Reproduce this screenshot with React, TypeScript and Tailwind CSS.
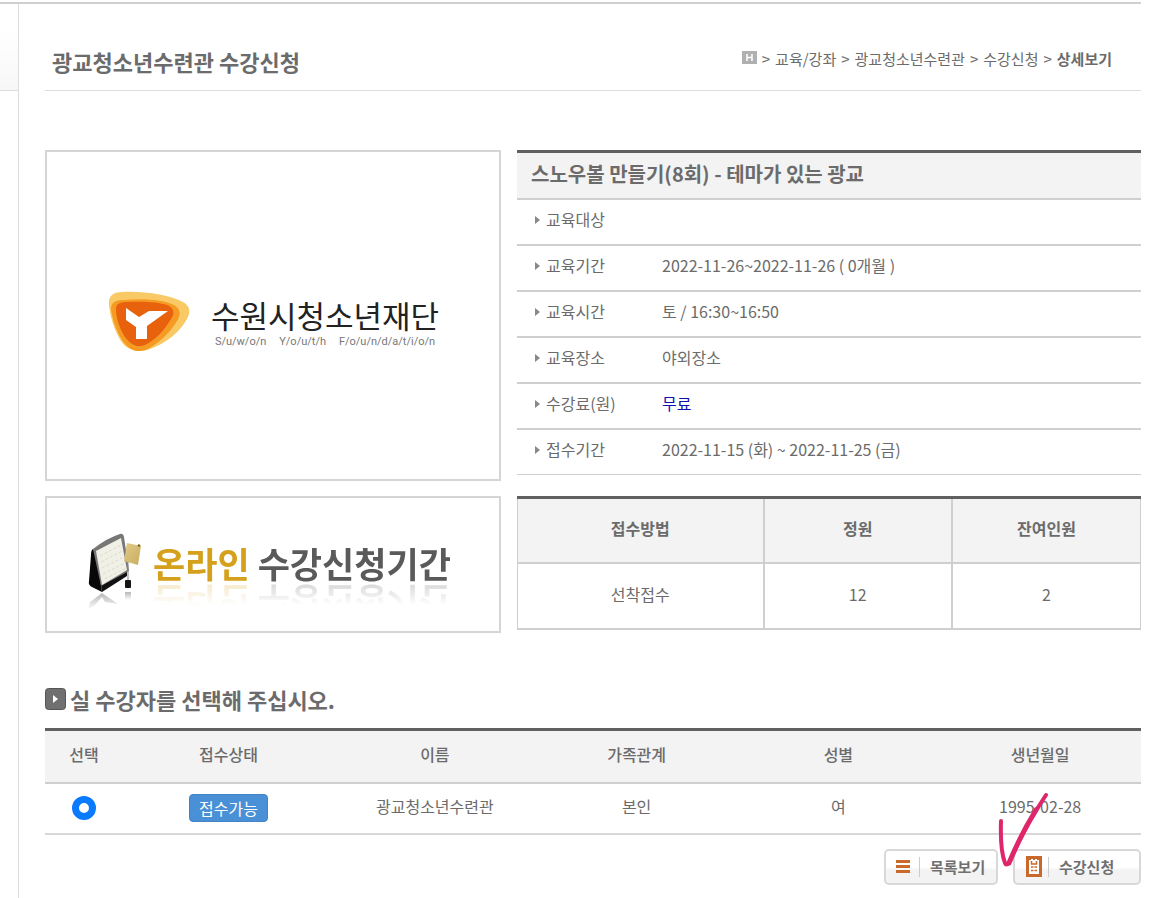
import { useState } from "react";

const details = [
  { label: "교육대상", value: "" },
  { label: "교육기간", value: "2022-11-26~2022-11-26 ( 0개월 )" },
  { label: "교육시간", value: "토 / 16:30~16:50" },
  { label: "교육장소", value: "야외장소" },
  { label: "수강료(원)", value: "무료", highlight: true },
  { label: "접수기간", value: "2022-11-15 (화) ~ 2022-11-25 (금)" },
];

const crumbs = ["교육/강좌", "광교청소년수련관", "수강신청"];

function FoundationLogo() {
  return (
    <div className="flex items-center gap-5">
      <svg width="84" height="62" viewBox="0 0 84 62" aria-hidden="true">
        <path
          d="M2 14C1 5 6 1 15 1C38 0 63 4 76 11C83 15 84 21 80 28C73 41 58 53 43 58C31 62 21 60 14 50C7 39 3 25 2 14Z"
          fill="#f9c965"
        />
        <path
          d="M4 18C4 11 9 9 17 9C37 7 57 9 67 14C74 18 74 24 70 30C62 43 51 53 39 59C29 62 22 59 15 49C9 39 5 27 4 18Z"
          fill="#f59a23"
        />
        <path
          d="M9 18C9 13 13 11 19 11C35 10 52 11 60 14C67 17 68 22 64 28C57 40 48 49 38 54C30 57 24 54 18 46C12 37 9 26 9 18Z"
          fill="#e8610c"
        />
        <path d="M19 17L32 26L42 20H61L40 35V48H29V36L19 29Z" fill="#fff" />
      </svg>
      <div className="flex flex-col">
        <span className="text-[31px] leading-10 text-[#222]">수원시청소년재단</span>
        <span className="flex justify-between px-1 font-[Roboto] text-[11px] leading-[14px] text-[#777]">
          <span>S/u/w/o/n</span>
          <span>Y/o/u/t/h</span>
          <span>F/o/u/n/d/a/t/i/o/n</span>
        </span>
      </div>
    </div>
  );
}

function DeskCalendar() {
  return (
    <svg width="56" height="80" viewBox="0 0 56 80" aria-hidden="true">
      <defs>
        <linearGradient id="shade" x1="0" y1="0" x2="0" y2="1">
          <stop offset="0" stopColor="#999" stopOpacity="0.7" />
          <stop offset="1" stopColor="#999" stopOpacity="0" />
        </linearGradient>
        <linearGradient id="note" x1="0" y1="0" x2="1" y2="1">
          <stop offset="0" stopColor="#e0ca88" />
          <stop offset="1" stopColor="#c9ae60" />
        </linearGradient>
      </defs>
      <path d="M6 16Q4 17 4 22L2 48Q1 52 5 54L15 59L10 24Z" fill="#080808" />
      <path d="M15 59L40 43V36L14 52Z" fill="#111" />
      <path d="M6 16Q20 5 33 1Q36 0 37 4L42 38L14 53Z" fill="#777" />
      <path d="M9 18L34 5L40 37L15 52Z" fill="#f0f0e6" />
      <path d="M13 23l21-11M14 29l21-11M15 35l22-11M16 41l22-11M18 46l21-11" stroke="#dcdccc" strokeDasharray="3 2" />
      <path d="M41 28V48" stroke="#888" />
      <path d="M40 10L54 13L51 32L37 28Z" fill="url(#note)" />
      <path d="M51 12l2 1" stroke="#775c22" strokeWidth="2" />
      <rect x="38" y="47" width="6" height="8" rx="1" fill="#151515" />
      <path d="M1 77L3 69L15 60L31 71L18 69L15 64L8 72Z" fill="url(#shade)" />
      <rect x="38" y="59" width="6" height="8" fill="url(#shade)" />
    </svg>
  );
}

function CourseInfo() {
  return (
    <table className="w-full table-fixed border-collapse text-left">
      <colgroup>
        <col className="w-[145px]" />
        <col />
      </colgroup>
      <thead>
        <tr className="h-[47px] border-t-3 border-b-2 border-t-[#606060] border-b-[#cfcfcf] bg-[#f3f3f3]">
          <th colSpan={2} className="px-[14px] pb-[2px] text-xl leading-6 font-bold">
            스노우볼 만들기(8회) - 테마가 있는 광교
          </th>
        </tr>
      </thead>
      <tbody>
        {details.map((row) => (
          <tr key={row.label} className="h-[46px] border-b-2 border-[#cfcfcf] last:border-b">
            <th scope="row" className="pb-[6px] pl-[18px] font-normal">
              <span className="flex items-center gap-[6px]">
                <svg width="5" height="8" viewBox="0 0 5 8" className="mt-[2px]" aria-hidden="true">
                  <path d="M0 0L5 4L0 8Z" fill="#888" />
                </svg>
                {row.label}
              </span>
            </th>
            <td className={row.highlight ? "pb-[6px] text-[#1010b0]" : "pb-[6px]"}>{row.value}</td>
          </tr>
        ))}
      </tbody>
    </table>
  );
}

function Capacity() {
  const th = "border-x-2 border-[#cfcfcf] pb-1 font-bold first:border-l last:border-r";
  const td = "border-x-2 border-[#cfcfcf] pb-1 first:border-l last:border-r";
  return (
    <table className="w-full table-fixed border-collapse text-center">
      <colgroup>
        <col className="w-[246px]" />
        <col />
        <col />
      </colgroup>
      <thead>
        <tr className="h-[65px] border-t-3 border-b-2 border-t-[#606060] border-b-[#cfcfcf] bg-[#f3f3f3]">
          <th className={th}>접수방법</th>
          <th className={th}>정원</th>
          <th className={th}>잔여인원</th>
        </tr>
      </thead>
      <tbody>
        <tr className="h-[66px] border-b-2 border-[#cfcfcf]">
          <td className={td}>선착접수</td>
          <td className={td}>12</td>
          <td className={td}>2</td>
        </tr>
      </tbody>
    </table>
  );
}

function Applicants() {
  const [selected, setSelected] = useState("self");

  return (
    <table className="w-full table-fixed border-collapse text-center">
      <colgroup>
        <col className="w-[78px]" />
        <col className="w-[211px]" />
        <col />
        <col />
        <col />
        <col />
      </colgroup>
      <thead>
        <tr className="h-[53px] border-t-3 border-b-2 border-t-[#606060] border-b-[#cfcfcf] bg-[#f3f3f3]">
          {["선택", "접수상태", "이름", "가족관계", "성별", "생년월일"].map((name) => (
            <th key={name} className="pb-1 font-medium">
              {name}
            </th>
          ))}
        </tr>
      </thead>
      <tbody>
        <tr className="h-[51px] border-b-2 border-[#d8d8d8]">
          <td>
            <input
              type="radio"
              name="applicant"
              value="self"
              aria-label="광교청소년수련관"
              checked={selected === "self"}
              onChange={(e) => setSelected(e.target.value)}
              className="mx-auto block size-6 appearance-none rounded-full border border-gray-400 bg-white checked:border-[7px] checked:border-[#0a7aff]"
            />
          </td>
          <td>
            <span className="inline-flex h-7 items-center rounded-sm border border-[#4384c4] bg-[#4a90d6] px-[9px] text-white">
              접수가능
            </span>
          </td>
          <td className="pb-1">광교청소년수련관</td>
          <td className="pb-1">본인</td>
          <td className="pb-1">여</td>
          <td className="pb-1">1995-02-28</td>
        </tr>
      </tbody>
    </table>
  );
}

function Actions() {
  const button =
    "flex h-9 items-center rounded-[5px] border-2 border-[#d8d8d8] bg-linear-to-b from-white from-50% to-[#f3f3f3] to-60% text-[15px] font-bold text-[#707070]";
  return (
    <div className="relative flex justify-end gap-[15px]">
      <button type="button" className={`${button} w-[114px] pl-[10px]`}>
        <svg width="14" height="13" viewBox="0 0 14 13" aria-hidden="true">
          <path d="M0 1.5H14M0 6.5H14M0 11.5H14" stroke="#c96a2b" strokeWidth="3" />
        </svg>
        <span className="mr-[10px] ml-[9px] h-5 w-px bg-[#ccc]" />
        목록보기
      </button>
      <button type="button" className={`${button} w-[128px] pl-[11px]`}>
        <svg width="16" height="21" viewBox="0 0 16 21" aria-hidden="true">
          <path d="M0 0H16V21H0Z" fill="#c9682b" />
          <path d="M3 4H5V3H7V4H9V3H11V4H13V18H3Z" fill="#fff" />
          <path d="M5.500 5V8H10.500V5M5 11H7.500M8.500 11H11M5 14.500H7.500M8.500 14.500H11" fill="none" stroke="#c9682b" strokeWidth="1.500" />
        </svg>
        <span className="mr-[10px] ml-[6px] h-5 w-px bg-[#ccc]" />
        수강신청
      </button>
      <svg
        className="pointer-events-none absolute right-[91px] bottom-[17px]"
        width="52"
        height="76"
        viewBox="0 0 52 76"
        aria-hidden="true"
      >
        <path
          d="M3 29Q2 58 7 71Q8 74 11 71Q26 36 48 3"
          fill="none"
          stroke="#e0266a"
          strokeWidth="4"
          strokeLinecap="round"
          strokeLinejoin="round"
        />
        <path d="M11 71Q23 42 38 18" fill="none" stroke="#e0266a" strokeWidth="5" strokeLinecap="round" />
      </svg>
    </div>
  );
}

export default function App() {
  return (
    <div className="flex min-h-screen flex-col bg-white pt-[2px] pr-[29px] font-['Noto_Sans_CJK_KR',sans-serif] text-base leading-6 text-[#6b6b6b]">
      <div className="flex grow border-t-2 border-[#cfcfcf]">
        <div className="w-[19px] shrink-0 border-r border-[#ddd]">
          <div className="h-[87px] border-b border-[#ddd] bg-linear-to-b from-white from-30% to-[#f7f7f7]" />
        </div>

        <main className="min-w-0 grow pl-[26px]">
          <header className="flex h-[87px] items-center justify-between border-b border-[#ddd] pr-[29px] pl-[7px]">
            <h1 className="pt-7 text-[22px] leading-8 font-bold">광교청소년수련관 수강신청</h1>
            <nav className="flex items-center gap-[5px] pt-6 text-[15px]">
              <a href="#" aria-label="홈" className="mb-1 flex h-[13px] w-[15px] items-center justify-center bg-[#b0b0b0]">
                <svg width="7" height="7" viewBox="0 0 7 7" aria-hidden="true">
                  <path d="M1 0V7M6 0V7M1 3.500H6" stroke="#fff" strokeWidth="1.500" />
                </svg>
              </a>
              {crumbs.map((crumb) => (
                <span key={crumb} className="flex gap-[5px]">
                  <span>&gt;</span>
                  <a href="#">{crumb}</a>
                </span>
              ))}
              <span>&gt;</span>
              <strong className="font-bold">상세보기</strong>
            </nav>
          </header>

          <div className="mt-[59px] grid grid-cols-[456fr_624fr] items-start gap-4">
            <div className="flex flex-col gap-[15px]">
              <div className="flex h-[331px] items-center justify-center border-2 border-[#d5d5d5] pt-3">
                <FoundationLogo />
              </div>
              <div className="flex h-[137px] items-center justify-center gap-[10px] border-2 border-[#d5d5d5] pt-4 pr-2">
                <DeskCalendar />
                <p className="mb-5 text-[35px] leading-[42px] font-bold text-[#5a5a5a] [-webkit-box-reflect:below_-2px_linear-gradient(transparent_45%,rgba(0,0,0,0.25))]">
                  <span className="text-[#d5a01c]">온라인</span> 수강신청기간
                </p>
              </div>
            </div>
            <div className="flex flex-col gap-[21px]">
              <CourseInfo />
              <Capacity />
            </div>
          </div>

          <section className="mt-[50px]">
            <h2 className="mb-[13px] flex items-center gap-1 text-[22px] leading-8 font-bold">
              <svg width="21" height="22" viewBox="0 0 21 22" aria-hidden="true">
                <rect x="0.500" y="0.500" width="20" height="21" rx="3" fill="#707070" stroke="#555" />
                <path d="M8 7L13 11L8 15Z" fill="#fff" />
              </svg>
              실 수강자를 선택해 주십시오.
            </h2>
            <Applicants />
          </section>

          <div className="mt-[14px]">
            <Actions />
          </div>
        </main>
      </div>
    </div>
  );
}
